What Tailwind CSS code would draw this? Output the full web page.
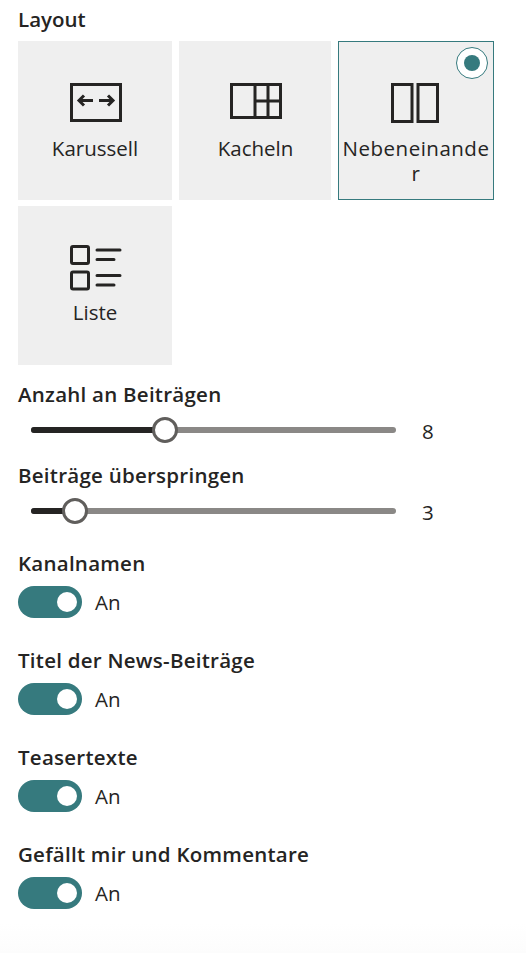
<!DOCTYPE html>
<html lang="de">
<head>
    <meta charset="UTF-8">
    <title>Layout</title>
    <script src="https://cdn.jsdelivr.net/npm/@tailwindcss/browser@4"></script>
</head>
<body class="bg-white text-[#252423] font-['Open_Sans','Noto_Sans',sans-serif] w-[526px] h-[954px] overflow-hidden">
    <div class="pl-[18px] pt-[6px]">
        <h2 class="text-[20.500px] leading-[27px] font-semibold h-[35px]">Layout</h2>

        <div class="grid grid-cols-[154px_152px_156px] gap-x-[7px] gap-y-[6px]">
            <div class="h-[159px] bg-[#efefef] flex flex-col items-center pt-[42px]">
                <svg class="w-[52px] h-[40px] ml-[2px]" viewBox="0 0 52 40" fill="none" stroke="#252423" stroke-width="3">
                    <rect x="1.500" y="1.500" width="49" height="36"/>
                    <path d="M23 17.500H9M14 12.500l-5 5 5 5M29 17.500h14M38 12.500l5 5-5 5"/>
                </svg>
                <span class="text-[20.500px] leading-[25px] mt-[13px]">Karussell</span>
            </div>
            <div class="h-[159px] bg-[#efefef] flex flex-col items-center pt-[42px]">
                <svg class="w-[52px] h-[36px] ml-[2px]" viewBox="0 0 52 36" fill="none" stroke="#252423" stroke-width="3">
                    <rect x="1.500" y="1.500" width="49" height="33"/>
                    <path d="M25 1.500v33M38 1.500v33M25 18h25"/>
                </svg>
                <span class="text-[20.500px] leading-[25px] mt-[17px] ml-[1px]">Kacheln</span>
            </div>
            <div class="relative h-[159px] bg-[#efefef] border border-[#367a7e] flex flex-col items-center pt-[41px]">
                <div class="absolute top-[5px] right-[5px] w-[32px] h-[32px] rounded-full bg-white border border-[#367a7e] flex items-center justify-center">
                    <div class="w-[16px] h-[16px] rounded-full bg-[#367a7e]"></div>
                </div>
                <svg class="w-[48px] h-[40px] mr-[2px]" viewBox="0 0 48 40" fill="none" stroke="#252423" stroke-width="3">
                    <rect x="1.500" y="1.500" width="19.500" height="37"/>
                    <rect x="27" y="1.500" width="19.500" height="37"/>
                </svg>
                <span class="text-[20.500px] leading-[25px] tracking-[0.5px] mt-[13px] w-[148px] text-center break-all">Nebeneinander</span>
            </div>
            <div class="h-[159px] bg-[#efefef] flex flex-col items-center pt-[39px]">
                <svg class="w-[52px] h-[46px] ml-[2px]" viewBox="0 0 52 46" fill="none" stroke="#252423" stroke-width="3" stroke-linecap="round">
                    <rect x="1.500" y="1.500" width="17" height="17" rx="1.500"/>
                    <rect x="1.500" y="27" width="17" height="17" rx="1.500"/>
                    <path d="M27 5h23M27 14.500h17M27 30.500h23M27 40h17"/>
                </svg>
                <span class="text-[20.500px] leading-[25px] mt-[9px]">Liste</span>
            </div>
        </div>

        <h2 class="text-[20.500px] leading-[27px] tracking-[0.25px] font-semibold mt-[16px]">Anzahl an Beiträgen</h2>
        <div class="flex items-center h-[32px] mt-[6px] pl-[13px]">
            <div class="relative w-[365px] h-[6px] rounded-full bg-[#8a8886]">
                <div class="w-[134px] h-[6px] rounded-l-full bg-[#252423]"></div>
                <div class="absolute left-[121px] top-[-10px] w-[26px] h-[26px] rounded-full bg-white border-[3px] border-[#605e5c]"></div>
            </div>
            <span class="ml-[26px] text-[20.500px] font-medium leading-[26px] mt-[2px]">8</span>
        </div>

        <h2 class="text-[20.500px] leading-[27px] tracking-[0.25px] font-semibold mt-[16px]">Beiträge überspringen</h2>
        <div class="flex items-center h-[32px] mt-[6px] pl-[13px]">
            <div class="relative w-[365px] h-[6px] rounded-full bg-[#8a8886]">
                <div class="w-[44px] h-[6px] rounded-l-full bg-[#252423]"></div>
                <div class="absolute left-[31px] top-[-10px] w-[26px] h-[26px] rounded-full bg-white border-[3px] border-[#605e5c]"></div>
            </div>
            <span class="ml-[26px] text-[20.500px] font-medium leading-[26px] mt-[2px]">3</span>
        </div>

        <div class="flex flex-col gap-[29px] mt-[23px]">
            <div>
                <h2 class="text-[20.500px] leading-[27px] tracking-[0.25px] font-semibold">Kanalnamen</h2>
                <div class="flex items-center mt-[9px] h-[32px]">
                    <div class="w-[64px] h-[32px] rounded-full bg-[#367a7e] relative">
                        <div class="absolute right-[5px] top-[6px] w-[20px] h-[20px] rounded-full bg-white"></div>
                    </div>
                    <span class="ml-[13px] text-[20.500px] leading-[26px]">An</span>
                </div>
            </div>
            <div>
                <h2 class="text-[20.500px] leading-[27px] tracking-[0.25px] font-semibold">Titel der News-Beiträge</h2>
                <div class="flex items-center mt-[9px] h-[32px]">
                    <div class="w-[64px] h-[32px] rounded-full bg-[#367a7e] relative">
                        <div class="absolute right-[5px] top-[6px] w-[20px] h-[20px] rounded-full bg-white"></div>
                    </div>
                    <span class="ml-[13px] text-[20.500px] leading-[26px]">An</span>
                </div>
            </div>
            <div>
                <h2 class="text-[20.500px] leading-[27px] tracking-[0.25px] font-semibold">Teasertexte</h2>
                <div class="flex items-center mt-[9px] h-[32px]">
                    <div class="w-[64px] h-[32px] rounded-full bg-[#367a7e] relative">
                        <div class="absolute right-[5px] top-[6px] w-[20px] h-[20px] rounded-full bg-white"></div>
                    </div>
                    <span class="ml-[13px] text-[20.500px] leading-[26px]">An</span>
                </div>
            </div>
            <div>
                <h2 class="text-[20.500px] leading-[27px] tracking-[0.25px] font-semibold">Gefällt mir und Kommentare</h2>
                <div class="flex items-center mt-[9px] h-[32px]">
                    <div class="w-[64px] h-[32px] rounded-full bg-[#367a7e] relative">
                        <div class="absolute right-[5px] top-[6px] w-[20px] h-[20px] rounded-full bg-white"></div>
                    </div>
                    <span class="ml-[13px] text-[20.500px] leading-[26px]">An</span>
                </div>
            </div>
        </div>
    </div>
    <div class="h-[30px] mt-[14px] bg-linear-to-b from-white to-[#fcfcfc]"></div>
</body>
</html>
